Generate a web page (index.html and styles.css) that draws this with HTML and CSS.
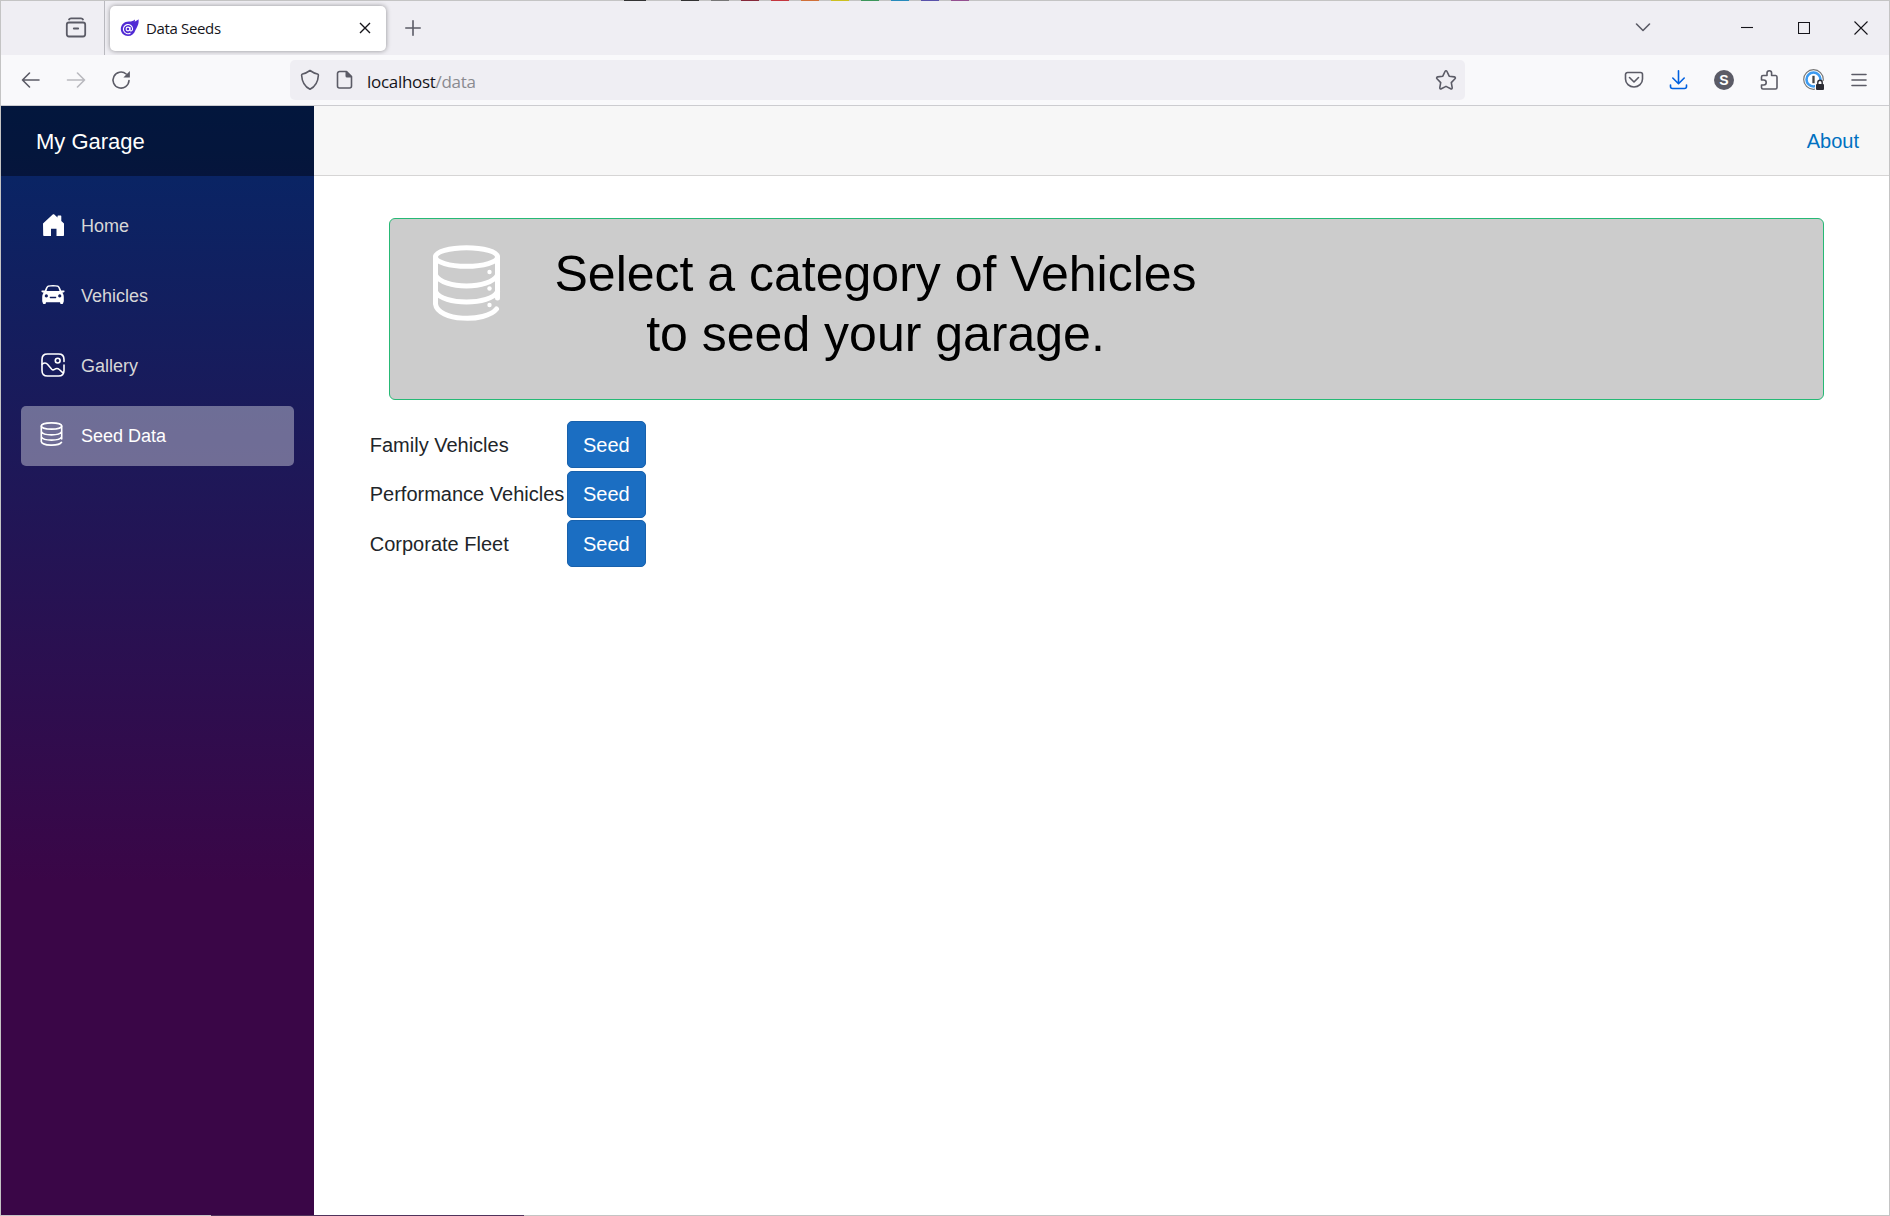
FILE: index.html
```html
<!DOCTYPE html>
<html lang="en">
<head>
<meta charset="utf-8">
<title>Data Seeds</title>
<link rel="stylesheet" href="styles.css">
</head>
<body>
<div class="window">
  <i class="edge"></i><i class="edge-bottom"></i>
  <header class="tabstrip">
    <div class="firefox-view">
      <svg width="22" height="22" viewBox="0 0 22 22" class="line view-icon"><path d="M4 2.500c.5-1 1-1.200 2-1.200h10c1 0 1.500.200 2 1.200"/><rect x="1.800" y="5.500" width="18.400" height="14" rx="2.200"/><path d="M8.800 11.500h4.400"/></svg>
    </div>
    <div class="tab">
      <svg width="20" height="18" viewBox="0 0 20 18"><path d="M9 2.500c3 0 4-.5 6-2 0 1 0 1.500-.5 2 1.500-.4 3-1.300 4-2.300C19.300 5 17 8 15.500 11c-1.500 4-4 6-7.500 6C4 17 .800 14 .800 10S4 2.500 9 2.500z" fill="#512bd4"/><g fill="none" stroke="#fff" stroke-width="1.100"><circle cx="8" cy="10" r="1.900"/><path d="M10 8v3c0 1.500 2.600 1.200 2.600-1A4.600 4.600 0 1 0 10.500 14"/></g></svg>
      <span class="tab-title">Data Seeds</span>
      <svg class="tab-close" width="12" height="12" viewBox="0 0 12 12"><path d="M1 1l10 10M11 1L1 11"/></svg>
    </div>
    <svg class="new-tab line" width="16" height="16" viewBox="0 0 16 16"><path d="M8 .8v14.400M.8 8h14.400"/></svg>
    <div class="win-controls">
      <svg class="line" width="16" height="12" viewBox="0 0 16 12"><path d="M1.500 2L8 8.500 14.500 2"/></svg>
      <svg class="dark" width="12" height="14" viewBox="0 0 12 14"><path d="M0 6.500h12"/></svg>
      <svg class="dark" width="12" height="12" viewBox="0 0 12 12"><path d="M.5.5h11v11H.5z"/></svg>
      <svg class="dark" width="14" height="14" viewBox="0 0 14 14"><path d="M.5.5l13 13M13.500.5l-13 13"/></svg>
    </div>
  </header>
  <nav class="toolbar">
    <div class="history">
      <svg class="line" width="20" height="20" viewBox="0 0 20 20"><path d="M18 10H1.500M8.500 3l-7 7 7 7"/></svg>
      <svg class="line faded" width="20" height="20" viewBox="0 0 20 20"><path d="M1.500 10H18.500M11.500 3l7 7-7 7"/></svg>
      <svg class="line" width="20" height="20" viewBox="0 0 20 20"><path d="M18 10.500A8 8 0 1 1 15.200 4"/><path d="M18.900 1v6.500h-6.500z" fill="#5b5b66" stroke="none"/></svg>
    </div>
    <div class="urlbar">
      <svg class="line" width="20" height="22" viewBox="0 0 20 22"><path d="M10 1.500c2.500 1.800 4.800 3 7.500 3.500.8.200 1 .6.900 1.200C18 13 15.500 17.500 10 20.300 4.500 17.500 2 13 1.600 6.200c0-.6.1-1 .9-1.200C5.200 4.500 7.500 3.300 10 1.500z"/></svg>
      <svg class="line page" width="17" height="20" viewBox="0 0 17 20"><path d="M3.500 1.500h7l5 5V16a2 2 0 0 1-2 2h-10a2 2 0 0 1-2-2V3.500a2 2 0 0 1 2-2z"/><path d="M9.500 1h1l5.500 5.500v1H11A1.500 1.500 0 0 1 9.500 6z" fill="#5b5b66" stroke="none"/></svg>
      <span class="url">localhost<span class="path">/data</span></span>
      <svg class="line star" width="22" height="22" viewBox="0 0 22 22"><path d="M11 1.800c.5 0 .8.300 1 .700l2.200 4.700 5.200.700c1 .200 1.300 1.200.600 1.900L16.300 13.600l.9 5.100c.2 1-.7 1.600-1.500 1.100L11 17.400l-4.700 2.400c-.8.500-1.700-.1-1.500-1.100l.9-5.100L2 9.800c-.7-.7-.4-1.700.6-1.900l5.200-.700L10 2.500c.2-.4.500-.7 1-.700z"/></svg>
    </div>
    <div class="extensions">
      <svg class="line" width="20" height="20" viewBox="0 0 20 20"><path d="M3.500 2.500h13a2 2 0 0 1 2 2V9a8.500 8 0 0 1-17 0V4.500a2 2 0 0 1 2-2z"/><path d="M5.500 7.500L10 12l4.500-4.500"/></svg>
      <svg class="line blue" width="20" height="20" viewBox="0 0 20 20"><path d="M9.500 .8v12.500M3.800 8l5.700 5.700L15.200 8M1.500 15v1.500a2 2 0 0 0 2 2h12a2 2 0 0 0 2-2V15"/></svg>
      <span class="avatar">S</span>
      <svg class="line" width="20" height="22" viewBox="0 0 20 22"><path d="M8 6.500V4a2.300 2.300 0 0 1 4.600 0v2.500h4A1.500 1.500 0 0 1 18 8v10.500a1.500 1.500 0 0 1-1.500 1.500H4a1.500 1.500 0 0 1-1.500-1.500V16h2.200a2.200 2.200 0 0 0 0-5H2.500V8A1.500 1.500 0 0 1 4 6.500z"/></svg>
      <svg class="vault" width="22" height="22" viewBox="0 0 22 22"><circle cx="10.500" cy="10.500" r="9.800" fill="#fff" stroke="#777" stroke-width="1.200"/><circle cx="10.500" cy="10.500" r="7" fill="none" stroke="#3d9bf0" stroke-width="2.600"/><path d="M10.500 6.800v7.400" stroke="#444" stroke-width="2.300"/><path d="M12 12h10v10H12z" fill="#f9f9fb"/><rect x="13" y="15" width="8" height="6" rx="1" fill="#2b2b33"/><path d="M14.800 15v-1.500a2.200 2.200 0 0 1 4.400 0V15" fill="none" stroke="#2b2b33" stroke-width="1.400"/></svg>
      <svg class="line" width="16" height="14" viewBox="0 0 16 14"><path d="M1 1.500h14M1 7h14M1 12.500h14"/></svg>
    </div>
  </nav>
  <div class="page-body">
    <aside class="sidebar">
      <div class="brand">My Garage</div>
      <ul class="nav">
        <li><a class="nav-link"><svg width="24" height="24" viewBox="0 0 24 24" fill="#fff"><path d="M1 10.500L10.700 1.600c.5-.5 1.100-.5 1.600 0L15.500 4.500V3.200c0-.4.2-.6.6-.6h2.600c.4 0 .6.200.6.600v4.900l2.700 2.400V22.200c0 .5-.3.800-.8.800H14.500v-7.300H9V23H2c-.5 0-.8-.3-.8-.8z"/></svg>Home</a></li>
        <li><a class="nav-link"><svg class="wide-icon" width="24" height="24" viewBox="0 0 24 24"><path fill="#fff" fill-rule="evenodd" d="M7 2.500c3-.7 7-.7 10 0 1.500.500 2.500 3 3.200 5H23c.8 0 .8 1.500 0 1.700l-1.700.5c1 1 1.500 2.500 1.500 4.500v4l-.8 2.300c-.2.800-2.500.800-2.700 0l-.3-1.300H5l-.3 1.300c-.2.800-2.500.8-2.700 0l-.8-2.300v-4c0-2 .500-3.500 1.500-4.500L1 9.200C.2 9 .2 7.500 1 7.500h2.800c.7-2 1.700-4.500 3.200-5zM5.500 8h13c-.5-1.700-1.200-3.800-2.200-4.200-2.500-.4-6.100-.4-8.600 0C6.700 4.200 6 6.300 5.500 8zM5.300 11.300a1.600 1.600 0 1 0 .1 0zM18.700 11.300a1.600 1.600 0 1 0 .1 0zM9 13.700h6c.5 0 .3 1.500-.3 1.500H9.300C8.700 15.200 8.500 13.700 9 13.700z"/></svg>Vehicles</a></li>
        <li><a class="nav-link"><svg class="white wide-icon" width="24" height="24" viewBox="0 0 24 24"><path d="M23 8.500V6.500C23 2.500 21.500 1 17.500 1h-11C2.500 1 1 2.500 1 6.500v11C1 21.500 2.500 23 6.500 23h11c4 0 5.500-1.500 5.500-5.500V12"/><circle cx="16.700" cy="7.600" r="2.400"/><path d="M1.200 11.200c2.500-2 4-1.500 5.500.3l4 4.800c.8.800 1.800.8 2.800.1 1.700-1.200 3.300-1.200 4.800.1l4 3.700"/></svg>Gallery</a></li>
        <li><a class="nav-link active"><svg class="white db-small" width="24" height="24" viewBox="0 0 24 24"><use href="#db"/></svg>Seed Data</a></li>
      </ul>
    </aside>
    <main>
      <div class="top-row"><a class="about">About</a></div>
      <section class="content">
        <div class="banner">
          <svg class="db-large" width="68" height="76" viewBox="0 0 68 76">
            <g fill="none" stroke="#fff" stroke-width="5" stroke-linecap="round"><ellipse cx="33.500" cy="12" rx="31" ry="9.300"/><path d="M2.500 12v47c2 17 50 19 61 5M64.500 12v41M2.500 30c7 14.500 55 14.500 62 0M2.500 46.500c7 14 55 14 62 0"/></g>
            <g fill="#fff"><circle cx="56.500" cy="27" r="2.200"/><circle cx="56.500" cy="43.500" r="2.200"/><circle cx="56.500" cy="60" r="2.200"/></g>
          </svg>
          <h1>Select a category of Vehicles<br>to seed your garage.</h1>
        </div>
        <table class="seeds">
          <tr><td>Family Vehicles</td><td><button>Seed</button></td></tr>
          <tr><td>Performance Vehicles</td><td><button>Seed</button></td></tr>
          <tr><td>Corporate Fleet</td><td><button>Seed</button></td></tr>
        </table>
      </section>
    </main>
  </div>
</div>
<svg class="defs" width="0" height="0"><defs><g id="db"><ellipse cx="11.500" cy="4" rx="10.200" ry="3.100"/><path d="M1.300 4v15.500c.8 4.600 17.500 4.800 20.200.8M21.700 4v13M1.300 9.500c2 4.500 18.400 4.500 20.400 0M1.300 14.700c2 4.500 18.400 4.500 20.400 0"/></g></defs></svg>
</body>
</html>
```
FILE: styles.css
```css
* { box-sizing: border-box; }
body { margin: 0; font-family: "Liberation Sans", Arial, sans-serif; font-size: 20px; line-height: 30px; color: #212529; }
svg { display: block; flex: none; }
.defs { position: absolute; }
.line { fill: none; stroke: #5b5b66; stroke-width: 1.6; stroke-linecap: round; stroke-linejoin: round; }
.dark { fill: none; stroke: #15141a; stroke-width: 1.1; }
.white { fill: none; stroke: #fff; stroke-width: 1.6; stroke-linecap: round; }
.faded { opacity: .4; }
.line.blue { stroke: #0061e0; }

.window { position: relative; display: flex; flex-direction: column; width: 1890px; height: 1216px; border: 1px solid #c4c4c4; background: #fff; }
/* Strips of the desktop showing along the window edge */
.edge { position: absolute; top: -1px; left: 623px; width: 350px; height: 1px; background: linear-gradient(90deg, #333 0 22px, #c4c4c4 22px 57px, #333 57px 75px, #c4c4c4 75px 87px, #777 87px 105px, #c4c4c4 105px 117px, #85293b 117px 135px, #c4c4c4 135px 147px, #c4363f 147px 165px, #c4c4c4 165px 177px, #d07038 177px 195px, #c4c4c4 195px 207px, #ccc020 207px 225px, #c4c4c4 225px 237px, #3c965a 237px 255px, #c4c4c4 255px 267px, #278abb 267px 285px, #c4c4c4 285px 297px, #5a52aa 297px 315px, #c4c4c4 315px 327px, #955090 327px 345px, #c4c4c4 345px); }
.edge-bottom { position: absolute; bottom: -1px; left: 210px; width: 313px; height: 1px; background: #50335c; }

.tabstrip { display: flex; align-items: center; height: 54px; background: #efeef3; }
.firefox-view { display: flex; align-items: center; justify-content: flex-end; width: 104px; height: 54px; padding-right: 17px; border-right: 1px solid #b9b9bf; }
.view-icon { stroke-width: 1.8; }
.tab { display: flex; align-items: center; width: 276px; height: 45px; margin-left: 5px; padding: 0 15px 0 10px; border-radius: 5px; background: #fff; box-shadow: 0 0 5px rgba(0, 0, 0, .4); }
.tab-title { margin-left: 6px; font: 15px/20px "Open Sans", "Noto Sans", sans-serif; letter-spacing: -.35px; color: #15141a; }
.tab-close { margin-left: auto; fill: none; stroke: #15141a; stroke-width: 1.4; }
.new-tab { margin-left: 19px; }
.win-controls { display: flex; align-items: center; margin-left: auto; padding-right: 21px; padding-bottom: 1px; }
.win-controls svg:nth-child(2) { margin-left: 90px; }
.win-controls svg:nth-child(3) { margin-left: 45px; }
.win-controls svg:nth-child(4) { margin-left: 44px; }

.toolbar { display: flex; align-items: center; height: 51px; border-bottom: 1px solid #ccccd0; background: #f9f9fb; }
.history { display: flex; gap: 25px; width: 289px; padding-left: 20px; }
.urlbar { display: flex; align-items: center; width: 1175px; height: 40px; padding: 0 8px 0 10px; border-radius: 5px; background: #efeef3; }
.page { margin-left: 16px; }
.url { margin: 3px 0 0 14px; font: 17px/24px "Open Sans", "Noto Sans", sans-serif; letter-spacing: -.3px; color: #15141a; }
.path { color: #8a8a90; }
.star { margin-left: auto; }
.extensions { display: flex; align-items: center; gap: 25px; margin-left: auto; padding-right: 22px; }
.avatar { width: 20px; height: 20px; border-radius: 50%; background: #5b5b66; color: #fff; font: bold 14px/20px "Liberation Sans", sans-serif; text-align: center; }
.vault { margin: 0 1px 0 -1px; }

.page-body { display: flex; flex: 1; }
.sidebar { width: 313px; background: linear-gradient(180deg, #052767 0%, #3a0647 70%); }
.brand { height: 70px; padding: 1px 0 0 35px; background: rgba(0, 0, 0, .4); color: #fff; font-size: 22px; line-height: 70px; }
.nav { margin: 0; padding: 20px 20px 0; list-style: none; }
.nav li { padding-bottom: 10px; }
.nav-link { display: flex; align-items: center; height: 60px; padding-left: 21px; border-radius: 5px; color: #d7d7d7; font-size: 18px; }
.nav-link svg { margin: 0 15px 3px 0; }
.nav-link .wide-icon { margin: 0 16px 3px -1px; }
.nav-link .db-small { margin: 0 17px 4px -2px; }
.nav-link.active { background: rgba(255, 255, 255, .37); color: #fff; }

main { flex: 1; }
.top-row { display: flex; align-items: center; justify-content: flex-end; height: 70px; padding-right: 30px; border-bottom: 1px solid #d6d5d5; background: #f7f7f7; }
.about { color: #0071c1; }
.content { padding: 42px 64px 0 54.5px; }
.banner { display: flex; width: 1435px; height: 182px; margin-left: 20.5px; padding: 25px 0 0 43px; border: 1px solid #26b975; border-radius: 6px; background: #ccc; }
.db-large { margin-top: 1px; }
h1 { width: 642px; margin: 0 0 0 53.5px; color: #000; font-size: 50px; font-weight: 400; line-height: 60px; text-align: center; white-space: nowrap; }
.seeds { margin-top: 20px; border-collapse: collapse; }
td { height: 49.5px; padding: 1.25px; white-space: nowrap; }
button { display: block; width: 79px; height: 47px; padding: 0; border: 1px solid #1861ac; border-radius: 5px; background: #1b6ec2; color: #fff; font: 20px/30px "Liberation Sans", Arial, sans-serif; }
```
